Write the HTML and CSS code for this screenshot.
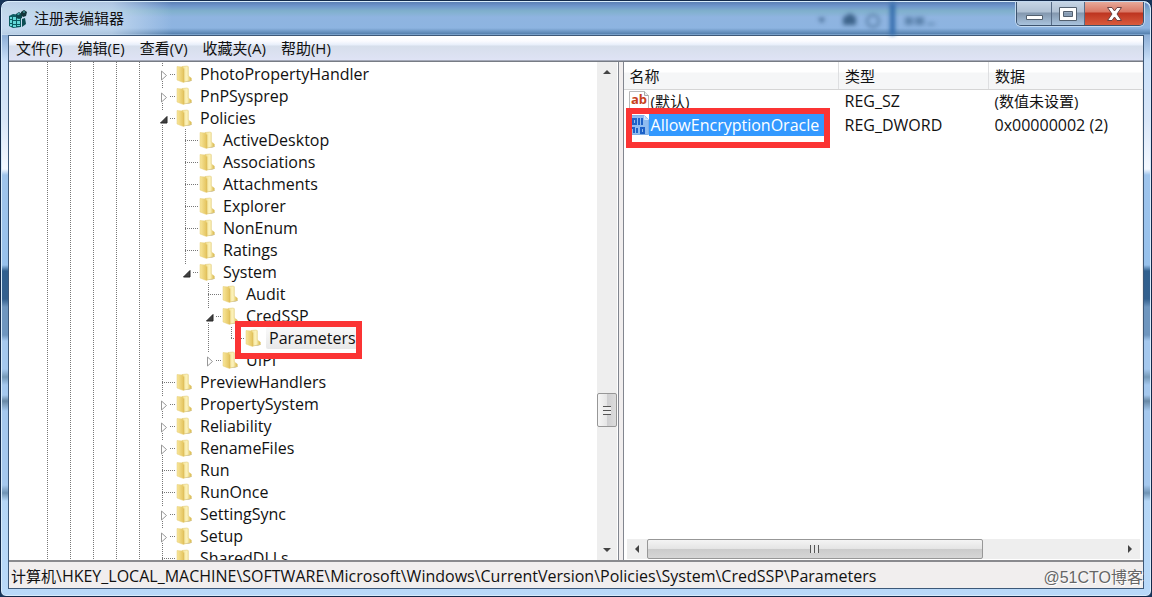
FILE: index.html
```html
<!DOCTYPE html>
<html lang="zh-CN">
<head>
<meta charset="UTF-8">
<meta name="viewport" content="width=device-width, initial-scale=1">
<title>注册表编辑器</title>
<link rel="stylesheet" href="styles.css">
</head>
<body>
<svg class="symbols" aria-hidden="true">
  <defs>
    <linearGradient id="gold" x1="0" x2="1">
      <stop offset="0" stop-color="#f3e093"/>
      <stop offset="0.55" stop-color="#fcf3bd"/>
      <stop offset="1" stop-color="#d9b745"/>
    </linearGradient>
    <linearGradient id="gold2" x1="0" x2="1">
      <stop offset="0" stop-color="#f8e69a"/>
      <stop offset="1" stop-color="#e3c25b"/>
    </linearGradient>
  </defs>
  <symbol id="folder" viewBox="0 0 16 18">
    <path d="M9 14h5.500l1.500 1.500-3 1.500H6z" fill="#cfccc4"/>
    <path d="M6 1.500l5.500-.5.8.8V11l3 2v2.500L8 17z" fill="url(#gold)" stroke="#dfc468" stroke-width=".5"/>
    <path d="M1 1.500L6.500 2 8 3.500v14l-2-.5-5-2z" fill="url(#gold2)" stroke="#e6cf7b" stroke-width=".5"/>
    <path d="M7.700 4v13" stroke="#dcbc57" stroke-width=".7"/>
  </symbol>
  <symbol id="closed" viewBox="0 0 11 11">
    <path d="M2.500 1v9l5-4.500z" fill="#fff" stroke="#989898"/>
  </symbol>
  <symbol id="opened" viewBox="0 0 11 11">
    <path d="M8 2.500V9H1.500z" fill="#404040" stroke="#262626"/>
  </symbol>
</svg>

<div class="window">
  <header class="titlebar">
    <svg class="app-icon" viewBox="0 0 20 20" aria-hidden="true">
      <path d="M1 7l4-2 8 1v12l-8 1-4-2z" fill="#0b5c61"/>
      <path d="M2 8h2v2H2zm3 0h3v3H5zm4 1h3v2H9zM2 11h2v3H2zm3 1h3v3H5zm4 0h3v3H9zM2 15h2v2H2zm3 1h3v2H5zm4 0h3v1H9z" fill="#63d8d7"/>
      <path d="M8 5l3-2 3 2v4l-3 1-3-1z" fill="#0b474c"/>
      <path d="M13 3l3-2 3 2-1 4-3 1-2-2z" fill="#12343a"/>
      <path d="M14 10l3-1 1 6-4 3z" fill="#0d4d53"/>
      <path d="M9 5l2-1 1 1-2 1zM15 3l1-1 1 1-1 1z" fill="#58bfc2"/>
    </svg>
    <h1>注册表编辑器</h1>
    <div class="behind" aria-hidden="true">
      <svg viewBox="0 0 150 32">
        <path d="M8 15h7l-3 5zM34 14l6-4 6 4v8H33v-8z" fill="#3e648b"/>
        <circle cx="63" cy="18" r="6" fill="none" stroke="#557ba3" stroke-width="2"/>
        <path d="M80-8h5v48h-5z" fill="#2f68aa"/>
        <path d="M95 14h8v8h-8zm10 0h9v8h-9zm12 6h8v2h-8z" fill="#5d84ae"/>
      </svg>
    </div>
    <div class="controls">
      <button type="button" aria-label="最小化"><svg viewBox="0 0 24 16"><path d="M4.500 9.500h16v4h-16z" fill="#fff" stroke="#53606f"/></svg></button>
      <button type="button" class="max" aria-label="最大化"><svg viewBox="0 0 24 16"><path fill-rule="evenodd" d="M3.500 1.500h17v13h-17zm4 4h9v5h-9z" fill="#fff" stroke="#53606f"/></svg></button>
      <button type="button" class="close" aria-label="关闭"><svg viewBox="0 0 24 16"><path d="M5.500 1.500h4.500l2.500 3.500 2.500-3.500h4.500l-4.500 6.500 4.500 6.500h-4.500l-2.500-3.500-2.500 3.500H5.500l4.500-6.500z" fill="#fff" stroke="#6b4040"/></svg></button>
    </div>
  </header>

  <main class="client">
    <nav class="menubar">
      <button type="button">文件(F)</button>
      <button type="button">编辑(E)</button>
      <button type="button">查看(V)</button>
      <button type="button">收藏夹(A)</button>
      <button type="button">帮助(H)</button>
    </nav>

    <div class="panes">
      <section class="tree-pane">
        <div class="tree">
          <div class="guides"><i></i><i></i><i></i><i></i><i></i></div>
          <ul class="keys">
            <li><div class="key"><button type="button" aria-label="展开"><svg><use href="#closed"/></svg></button><svg class="folder"><use href="#folder"/></svg><span>PhotoPropertyHandler</span></div></li>
            <li><div class="key"><button type="button" aria-label="展开"><svg><use href="#closed"/></svg></button><svg class="folder"><use href="#folder"/></svg><span>PnPSysprep</span></div></li>
            <li><div class="key"><button type="button" aria-label="折叠"><svg><use href="#opened"/></svg></button><svg class="folder"><use href="#folder"/></svg><span>Policies</span></div>
              <ul>
                <li><div class="key"><svg class="folder"><use href="#folder"/></svg><span>ActiveDesktop</span></div></li>
                <li><div class="key"><svg class="folder"><use href="#folder"/></svg><span>Associations</span></div></li>
                <li><div class="key"><svg class="folder"><use href="#folder"/></svg><span>Attachments</span></div></li>
                <li><div class="key"><svg class="folder"><use href="#folder"/></svg><span>Explorer</span></div></li>
                <li><div class="key"><svg class="folder"><use href="#folder"/></svg><span>NonEnum</span></div></li>
                <li><div class="key"><svg class="folder"><use href="#folder"/></svg><span>Ratings</span></div></li>
                <li><div class="key"><button type="button" aria-label="折叠"><svg><use href="#opened"/></svg></button><svg class="folder"><use href="#folder"/></svg><span>System</span></div>
                  <ul>
                    <li><div class="key"><svg class="folder"><use href="#folder"/></svg><span>Audit</span></div></li>
                    <li><div class="key"><button type="button" aria-label="折叠"><svg><use href="#opened"/></svg></button><svg class="folder"><use href="#folder"/></svg><span>CredSSP</span></div>
                      <ul>
                        <li><div class="key marked"><svg class="folder"><use href="#folder"/></svg><span class="current">Parameters</span></div></li>
                      </ul>
                    </li>
                    <li><div class="key"><button type="button" aria-label="展开"><svg><use href="#closed"/></svg></button><svg class="folder"><use href="#folder"/></svg><span>UIPI</span></div></li>
                  </ul>
                </li>
              </ul>
            </li>
            <li><div class="key"><svg class="folder"><use href="#folder"/></svg><span>PreviewHandlers</span></div></li>
            <li><div class="key"><button type="button" aria-label="展开"><svg><use href="#closed"/></svg></button><svg class="folder"><use href="#folder"/></svg><span>PropertySystem</span></div></li>
            <li><div class="key"><button type="button" aria-label="展开"><svg><use href="#closed"/></svg></button><svg class="folder"><use href="#folder"/></svg><span>Reliability</span></div></li>
            <li><div class="key"><button type="button" aria-label="展开"><svg><use href="#closed"/></svg></button><svg class="folder"><use href="#folder"/></svg><span>RenameFiles</span></div></li>
            <li><div class="key"><svg class="folder"><use href="#folder"/></svg><span>Run</span></div></li>
            <li><div class="key"><svg class="folder"><use href="#folder"/></svg><span>RunOnce</span></div></li>
            <li><div class="key"><button type="button" aria-label="展开"><svg><use href="#closed"/></svg></button><svg class="folder"><use href="#folder"/></svg><span>SettingSync</span></div></li>
            <li><div class="key"><button type="button" aria-label="展开"><svg><use href="#closed"/></svg></button><svg class="folder"><use href="#folder"/></svg><span>Setup</span></div></li>
            <li><div class="key"><svg class="folder"><use href="#folder"/></svg><span>SharedDLLs</span></div></li>
          </ul>
        </div>
        <div class="scroll vertical">
          <button type="button" aria-label="向上"><svg viewBox="0 0 10 10"><path d="M1 7l4-4 4 4z"/></svg></button>
          <div class="track"><div class="thumb"></div></div>
          <button type="button" aria-label="向下"><svg viewBox="0 0 10 10"><path d="M1 3h8L5 7z"/></svg></button>
        </div>
      </section>

      <section class="value-pane">
        <table>
          <colgroup><col class="col-name"><col class="col-type"><col></colgroup>
          <thead>
            <tr><th>名称</th><th>类型</th><th>数据</th></tr>
          </thead>
          <tbody>
            <tr>
              <td><div class="value">
                <svg viewBox="0 0 20 20" aria-hidden="true"><path d="M.5.500h15l4 4v15H.5z" fill="#fff" stroke="#b9b9b9"/><path d="M15.500.500v4h4" fill="#eee" stroke="#aaa"/><text x="2" y="13" class="ab">ab</text></svg>
                <span class="cn">(默认)</span></div></td>
              <td>REG_SZ</td><td class="cn">(数值未设置)</td>
            </tr>
            <tr>
              <td><div class="value marked">
                <svg viewBox="0 0 20 20" aria-hidden="true"><path d="M.5.500h15l4 4v15H.5z" fill="#8fbcf0" stroke="#7faee6"/><path d="M15.500.500v4h4" fill="#bcd6f5" stroke="#d4e6fa"/><path d="M4 4h3v5H4zM9 4h1v6M13 3v7M3 13h2v5M8 13v5M12 13h3v5h-3z" fill="none" stroke="#1e62c8" stroke-width="2"/></svg>
                <span class="selected">AllowEncryptionOracle</span></div></td>
              <td>REG_DWORD</td><td>0x00000002 (2)</td>
            </tr>
          </tbody>
        </table>
        <div class="scroll horizontal">
          <button type="button" aria-label="向左"><svg viewBox="0 0 10 10"><path d="M7 1v8L3 5z"/></svg></button>
          <div class="track"><div class="thumb"></div></div>
          <button type="button" aria-label="向右"><svg viewBox="0 0 10 10"><path d="M3 1l4 4-4 4z"/></svg></button>
        </div>
      </section>
    </div>

    <footer class="status">
      <p><span class="cn">计算机</span>\HKEY_LOCAL_MACHINE\SOFTWARE\Microsoft\Windows\CurrentVersion\Policies\System\CredSSP\Parameters</p>
      <small>@51CTO博客</small>
    </footer>
  </main>
</div>
</body>
</html>
```
FILE: styles.css
```css
* {
  box-sizing: border-box;
}
body {
  margin: 0;
  height: 100vh;
  overflow: hidden;
  background: #16355a;
  color: #111;
  font-family: "Open Sans", "Noto Sans CJK SC", sans-serif;
  font-size: 15px;
  line-height: 22px;
}
button {
  margin: 0;
  padding: 0;
  border: 0;
  background: none;
  color: inherit;
  font: inherit;
}
ul {
  margin: 0;
  padding: 0;
  list-style: none;
}
.symbols {
  position: absolute;
  width: 0;
  height: 0;
}

/* window frame */
.window {
  display: flex;
  flex-direction: column;
  height: 100vh;
  padding: 0 7px 7px;
  border: 1px solid #13294a;
  border-radius: 8px 8px 6px 6px;
  box-shadow: inset 0 0 0 1px #d8ecfb;
  background: linear-gradient(#8fb0d8 35px, #c9dff8 60px, #d9e6f8 120px, #f4f8ff 168px, #9fc4ec 174px, #97c1ec 264px, #31608f 270px, #34608e 298px, #6f96bf 306px, #6f96bf 334px, #a5c8ee 340px, #a5c8ee 368px, #7599b8 376px, #a5c8ee 384px, #a5c8ee 394px, #6888a5 400px, #a5c8ee 410px, #a5c8ee 484px, #6f93b4 492px, #b5d6f6 500px, #b9d9f9);
}
.titlebar {
  display: flex;
  align-items: center;
  height: 34px;
  margin: 0 -6px;
  padding: 0 6px 0 6px;
  border-top: 1px solid #d8ecfb;
  border-radius: 8px 8px 0 0;
  background:
    linear-gradient(90deg, #d3e3f3cc, #d3e3f3b0 110px, #d3e3f300 170px),
    linear-gradient(#5b7fb4 0, #6f96cc 4px, #80b0cc 9px, #8fb4e0 15px, #8db4e1 26px, #5580ae 32px, #9fc3e8 33px);
}
.app-icon {
  width: 20px;
  height: 20px;
}
h1 {
  flex: 1;
  margin: 0 0 2px 6px;
  font-size: 15px;
  font-weight: 400;
}
.behind {
  height: 32px;
  margin-right: 56px;
  overflow: hidden;
  filter: blur(2px);
}
.behind svg {
  width: 150px;
  height: 32px;
}
.controls {
  display: flex;
  align-self: flex-start;
  height: 24px;
  border: 1px solid #3d536e;
  border-top: 0;
  border-radius: 0 0 5px 5px;
  box-shadow: 0 0 0 1px #c3d9ef;
  overflow: hidden;
}
.controls button {
  display: grid;
  place-items: center;
  width: 35px;
  border-right: 1px solid #566b86;
  background: linear-gradient(#c5d4e4, #afc0d3 10px, #8397ae 11px, #a9c3dd);
}
.controls .max {
  width: 33px;
}
.controls .close {
  width: 58px;
  border-right: 0;
  background: linear-gradient(#e7a999, #d97764 10px, #bd3420 11px, #d95b3d);
}
.controls svg {
  width: 24px;
  height: 16px;
}

.client {
  flex: 1;
  display: flex;
  flex-direction: column;
  min-height: 0;
  border: 1px solid #3d5878;
  background: #f1eeee;
}
.menubar {
  display: flex;
  gap: 15px;
  height: 25px;
  padding: 0 7px;
  background: linear-gradient(#fff, #fbfbff 5px, #e7eefa 9px, #d6deeb 10px, #dfe3f5);
  border-bottom: 1px solid #a4a9b8;
}
.panes {
  flex: 1;
  display: flex;
  gap: 4px;
  min-height: 0;
  padding-right: 1px;
  border-top: 1px solid #777c85;
  border-bottom: 2px solid #8a8a8e;
}

/* key tree */
.tree-pane {
  flex: 0 0 53.8%;
  display: flex;
  padding-right: 1px;
  border-right: 1px solid #82868f;
  background: #fff;
}
.tree {
  flex: 1;
  display: flex;
  padding-left: 38px;
  overflow: hidden;
}
.guides {
  display: flex;
}
.guides i {
  width: 23px;
  background: repeating-linear-gradient(#777 0 1px, #fff 1px 2px) 0 0 / 1px 100% no-repeat;
}
.keys {
  padding-top: 1px;
}
.tree li {
  background: repeating-linear-gradient(#777 0 1px, #fff 1px 2px) 0 0 / 1px 100% no-repeat;
}
.tree li ul {
  margin-left: 23px;
}
.tree li li:last-child {
  background-size: 1px 12px;
}
.key {
  display: flex;
  align-items: center;
  height: 22px;
  padding-left: 14px;
  background: repeating-linear-gradient(90deg, #777 0 1px, #fff 1px 2px) 0 11px / 13px 1px no-repeat;
  font-size: 16px;
}
.key button {
  width: 11px;
  height: 14px;
  margin: 0 7px 0 -18px;
  background: #fff;
}
.key button svg {
  display: block;
  width: 11px;
  height: 11px;
  margin: 2px 0 0 1px;
}
.folder {
  width: 16px;
  height: 18px;
}
.key span {
  margin-left: 5px;
  padding: 0 3px;
  white-space: nowrap;
}
.key .current {
  background: linear-gradient(#fafafa, #e8e8e8);
  border-radius: 2px;
}
.marked {
  position: relative;
}
.marked::after {
  content: "";
  position: absolute;
  z-index: 1;
  top: -6px;
  left: 4px;
  box-sizing: border-box;
  width: 127px;
  height: 38px;
  border: 6px solid #fb3434;
}

/* scroll bars */
.scroll {
  display: flex;
  background: #eee;
}
.scroll button {
  display: grid;
  place-items: center;
  width: 20px;
  height: 20px;
}
.scroll button svg {
  width: 10px;
  height: 10px;
  fill: #444;
}
.track {
  flex: 1;
  display: flex;
}
.thumb {
  border: 1px solid #979797;
  border-radius: 2px;
}
.vertical {
  flex-direction: column;
  width: 20px;
}
.vertical .track {
  flex-direction: column;
}
.vertical .track::before {
  content: "";
  height: 68%;
}
.vertical .thumb {
  height: 34px;
  background:
    repeating-linear-gradient(#555 0 1px, #eee 1px 4px) center / 8px 9px no-repeat,
    linear-gradient(90deg, #f6f6f6, #e6e6e6 50%, #cfcfd1 50%, #dcdcdc);
}
.horizontal {
  margin: 0 2px 1px 3px;
}
.horizontal .thumb {
  width: 71%;
  background:
    repeating-linear-gradient(90deg, #555 0 1px, #e4e4e4 1px 4px) center / 9px 8px no-repeat,
    linear-gradient(#f4f4f4, #e4e4e4 50%, #cbcbcb 50%, #d6d6d6);
}

/* values */
.value-pane {
  flex: 1;
  display: flex;
  flex-direction: column;
  justify-content: space-between;
  min-width: 0;
  border-left: 1px solid #82868f;
  background: #fff;
}
table {
  width: 100%;
  table-layout: fixed;
  border-collapse: collapse;
}
.col-name {
  width: 215px;
}
.col-type {
  width: 150px;
}
th {
  height: 27px;
  padding: 2px 6px 0;
  border-right: 1px solid #dedfe1;
  border-bottom: 1px solid #d5d5d5;
  background: linear-gradient(#fff 10px, #f5f6f7 11px);
  font-weight: 400;
  text-align: left;
}
th:last-child {
  border-right: 0;
}
td {
  height: 24px;
  padding: 0 6px;
  font-size: 16px;
  white-space: nowrap;
}
td:first-child {
  padding: 0 0 0 5px;
}
.value {
  display: flex;
  align-items: center;
}
.value svg {
  width: 20px;
  height: 20px;
}
.value span {
  padding: 0 2px;
}
.value .selected {
  flex: 1;
  margin-right: 15px;
  background: #3399ff;
  color: #fff;
}
.value.marked::after {
  left: -3px;
  width: 204px;
  height: 40px;
}
.cn {
  font-size: 15px;
}
.ab {
  font: 700 13px "Open Sans", sans-serif;
  fill: #c8401c;
}

.status {
  display: flex;
  justify-content: space-between;
  height: 26px;
  padding: 3px 0 0 2px;
  white-space: nowrap;
}
.status p {
  margin: 0;
  font-size: 16px;
}
.status small {
  padding-top: 2px;
  color: #666;
  font: 16px/22px "Liberation Sans", "Noto Sans CJK SC", sans-serif;
  text-shadow: 1px 1px #fff;
}
```
